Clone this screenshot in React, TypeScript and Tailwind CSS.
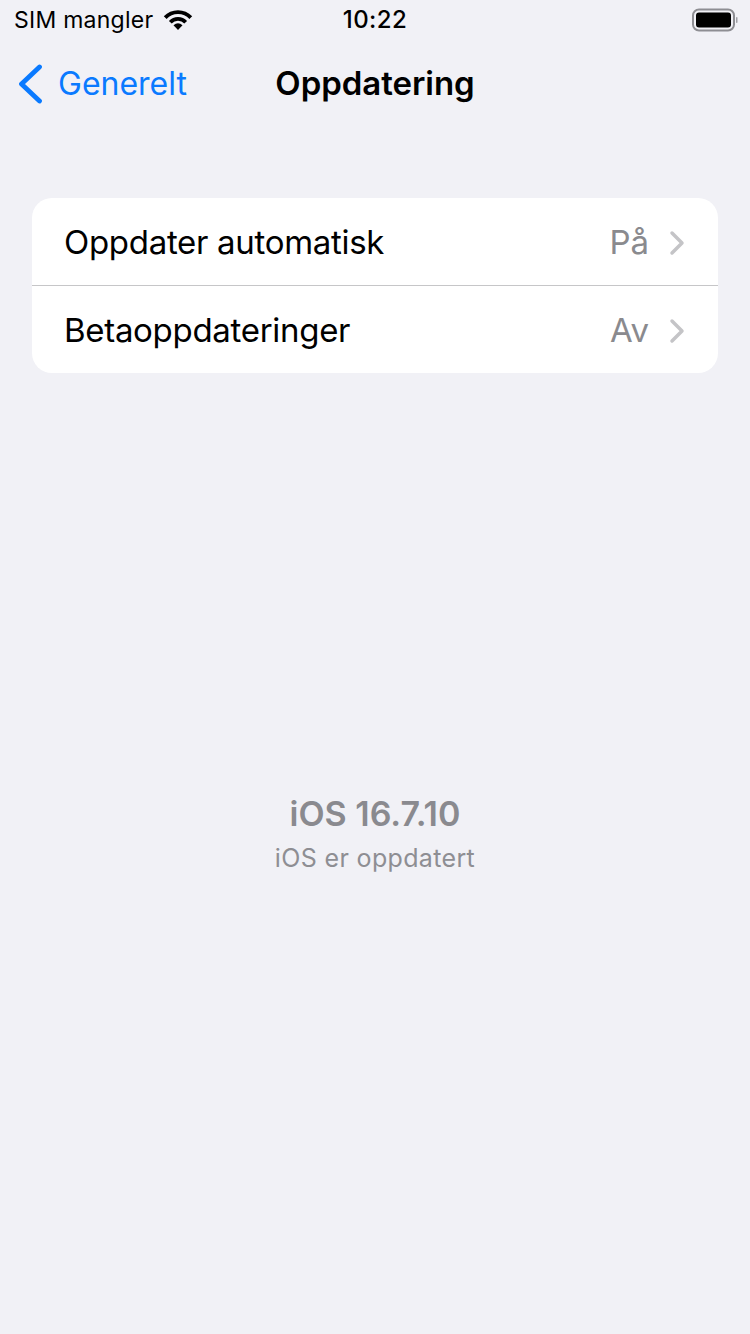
export default function App() {
  return (
    <div className="flex h-[1334px] w-[750px] flex-col overflow-hidden bg-[#f1f1f6] font-['Inter',sans-serif] text-black">
      {/* status bar */}
      <div className="relative flex h-10 items-center justify-between pl-[14px] pr-[14px]">
        <div className="flex items-center gap-[10px]">
          <span className="text-[23px] leading-none tracking-[0.25px]">SIM mangler</span>
          <svg width="30" height="22" viewBox="0 0 30 22" fill="none">
            <path d="M2.200 8.600A17.500 17.500 0 0 1 27.800 8.600" stroke="#000" strokeWidth="3.800" />
            <path d="M7.300 13.300A10.500 10.500 0 0 1 22.700 13.300" stroke="#000" strokeWidth="3.800" />
            <path d="M15 21 10.500 16.200Q15 12.500 19.500 16.200Z" fill="#000" />
          </svg>
        </div>
        <span className="absolute left-0 right-0 text-center text-[24px] font-medium leading-none tracking-[0.4px]">10:22</span>
        <svg width="46" height="24" viewBox="0 0 46 24" className="-mr-[2px] -mt-[1px]">
          <rect x="1" y="1.500" width="41" height="21" rx="6" fill="none" stroke="#8e8e93" strokeWidth="2" />
          <rect x="4" y="4.500" width="35" height="15" rx="3" fill="#000" />
          <rect x="44" y="9" width="1.500" height="6" rx="0.700" fill="#a0a0a5" />
        </svg>
      </div>

      {/* nav bar */}
      <div className="relative flex h-[88px] items-center pl-[18px]">
        <div className="flex items-center gap-[15px] text-[#0a7aff]">
          <svg width="25" height="40" viewBox="0 0 25 40" fill="none">
            <path d="M21.500 3 3.500 20l18 17" stroke="#0a7aff" strokeWidth="4.800" strokeLinecap="round" strokeLinejoin="round" />
          </svg>
          <span className="text-[32px] leading-none">Generelt</span>
        </div>
        <span className="absolute left-0 right-0 -mt-[2px] text-center text-[33px] font-semibold leading-none tracking-[-0.05px]">
          Oppdatering
        </span>
      </div>

      {/* settings list */}
      <div className="mx-8 mt-[70px] overflow-hidden rounded-[20px] bg-white">
        <Row label="Oppdater automatisk" value="På" />
        <div className="h-px bg-[#c6c6c8]" />
        <Row label="Betaoppdateringer" value="Av" />
      </div>

      {/* version info */}
      <div className="mt-[421px] flex flex-col items-center">
        <span className="text-[34px] font-semibold leading-[40px] text-[#8a8a8f]">iOS 16.7.10</span>
        <span className="mt-[9px] text-[25px] leading-[30px] tracking-[0.35px] text-[#8e8e93]">iOS er oppdatert</span>
      </div>
    </div>
  );
}

function Row({ label, value }: { label: string; value: string }) {
  return (
    <div className="flex h-[87px] items-center justify-between pl-[32px] pr-[33px] pt-[2px]">
      <span className="text-[33px] leading-none tracking-[-0.3px]">{label}</span>
      <div className="flex items-center gap-[20px]">
        <span className="text-[33px] leading-none text-[#8a8a8e]">{value}</span>
        <svg width="16" height="26" viewBox="0 0 16 26" fill="none">
          <path d="M3 3l10 10L3 23" stroke="#c4c4c7" strokeWidth="3.500" strokeLinecap="round" strokeLinejoin="round" />
        </svg>
      </div>
    </div>
  );
}
